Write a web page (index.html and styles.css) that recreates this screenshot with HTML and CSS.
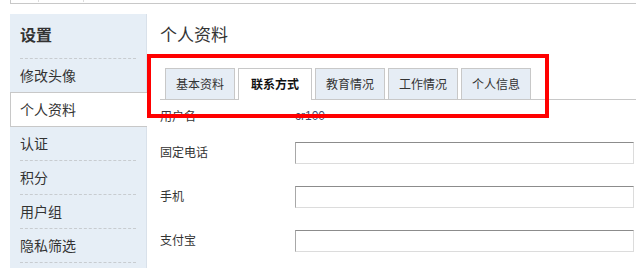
FILE: index.html
```html
<!DOCTYPE html>
<html lang="zh">
<head>
<meta charset="utf-8">
<title>个人资料</title>
<link rel="stylesheet" href="styles.css">
</head>
<body>
<div class="topbar"><span class="tick t1"></span><span class="tick t2"></span></div>
<div class="main">
  <aside class="sidebar">
    <h2 class="side-title">设置</h2>
    <ul class="side-list">
      <li class="side-item"><a>修改头像</a></li>
      <li class="side-item active"><a>个人资料</a></li>
      <li class="side-item"><a>认证</a></li>
      <li class="side-item"><a>积分</a></li>
      <li class="side-item"><a>用户组</a></li>
      <li class="side-item"><a>隐私筛选</a></li>
    </ul>
  </aside>
  <section class="content">
    <h1 class="page-title">个人资料</h1>
    <div class="tabs">
      <span class="tab">基本资料</span>
      <span class="tab active">联系方式</span>
      <span class="tab">教育情况</span>
      <span class="tab">工作情况</span>
      <span class="tab">个人信息</span>
    </div>
    <div class="form">
      <div class="row first"><span class="label">用户名</span><span class="value">cr100</span></div>
      <div class="row"><span class="label">固定电话</span><input class="field" type="text"></div>
      <div class="row"><span class="label">手机</span><input class="field" type="text"></div>
      <div class="row"><span class="label">支付宝</span><input class="field" type="text"></div>
    </div>
  </section>
</div>
<div class="highlight"></div>
</body>
</html>
```
FILE: styles.css
```css
html, body {
  margin: 0;
  padding: 0;
  background: #fff;
  font-family: "Noto Sans CJK SC", "Noto Sans", sans-serif;
  color: #333;
  overflow: hidden;
}
.topbar {
  position: relative;
  margin-left: 10px;
  height: 3px;
  border-left: 1px solid #c8c8c8;
  border-bottom: 1px solid #c8c8c8;
}
.tick {
  position: absolute;
  top: 0;
  width: 0;
  height: 2px;
  border-left: 1px solid #ddd;
}
.t1 { left: 27px; }
.t2 { left: 72px; }
.main {
  display: flex;
  margin-top: 10px;
  margin-left: 10px;
  min-height: 260px;
}
.sidebar {
  width: 136px;
  background: #e6eef6;
  border-right: 1px solid #d9e1ea;
  flex: none;
}
.side-title {
  margin: 0 10px;
  height: 44px;
  line-height: 40px;
  font-size: 16px;
  font-weight: bold;
  color: #333;
  border-bottom: 1px dashed #c8ccd0;
}
.side-list {
  list-style: none;
  margin: 0;
  padding: 0;
}
.side-item {
  padding: 0 10px;
}
.side-item a {
  display: block;
  height: 33px;
  line-height: 33px;
  font-size: 14px;
  color: #333;
  border-bottom: 1px dashed #c8ccd0;
}
.side-item.active {
  background: #fff;
  margin-top: -1px;
  margin-right: -1px;
  padding-left: 9px;
  border-left: 1px solid #c8c8c8;
  border-top: 1px solid #c8c8c8;
  border-bottom: 1px solid #c8c8c8;
}
.side-item.active a {
  border-bottom: 0;
}
.content {
  flex: 1;
  padding-left: 13px;
}
.page-title {
  margin: 0;
  height: 42px;
  line-height: 40px;
  font-size: 17px;
  font-weight: normal;
  color: #333;
}
.tabs {
  display: flex;
  align-items: flex-end;
  gap: 3px;
  padding: 12px 0 0 5px;
  border-bottom: 1px solid #c8c8c8;
}
.tab {
  height: 30px;
  line-height: 30px;
  padding: 0 10px;
  font-size: 12px;
  color: #333;
  background: #e6edf5;
  border: 1px solid #c8c8c8;
  border-bottom: 0;
}
.tab.active {
  height: 31px;
  margin-bottom: -1px;
  padding: 0 12px;
  background: #fff;
  font-weight: bold;
  color: #111;
}
.form {
  font-size: 12px;
}
.row {
  display: flex;
  align-items: center;
  height: 44px;
}
.row.first {
  height: 31px;
  align-items: flex-start;
}
.row.first .label,
.row.first .value {
  margin-top: 8px;
  line-height: 16px;
  padding-bottom: 0;
}
.label {
  width: 135px;
  flex: none;
  color: #333;
  padding-bottom: 4px;
}
.value {
  color: #3a4a6e;
  font-family: "Liberation Sans", Arial, sans-serif;
}
.field {
  flex: 1;
  margin: 0 2px 0 0;
  height: 22px;
  box-sizing: border-box;
  padding: 0 4px;
  border: 1px solid #dcdcdc;
  border-top-color: #8c8c8c;
  border-left-color: #a8a8a8;
  background: #fff;
  font-size: 12px;
}
.highlight {
  position: absolute;
  left: 147px;
  top: 54px;
  width: 402px;
  height: 64px;
  box-sizing: border-box;
  border: 4px solid #f00;
  pointer-events: none;
}
```
